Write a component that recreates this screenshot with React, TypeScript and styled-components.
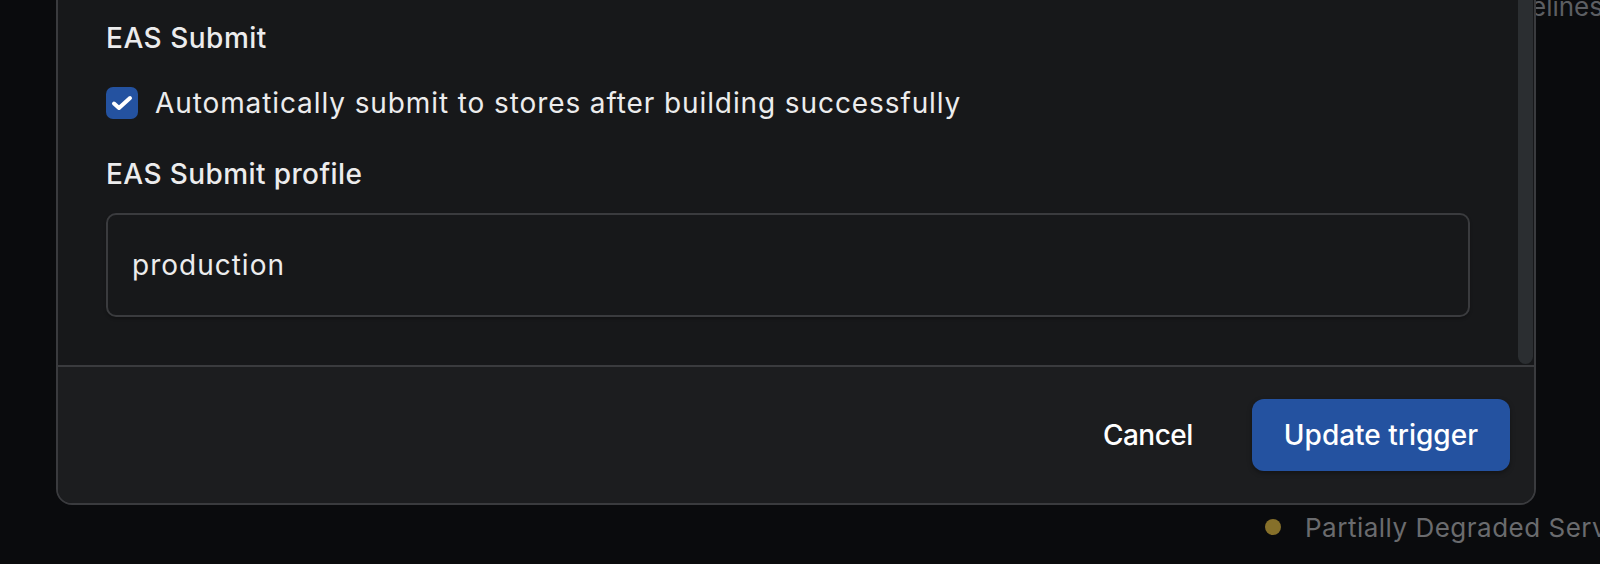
import React from "react";
import styled, { createGlobalStyle } from "styled-components";

const GlobalStyle = createGlobalStyle`
  html, body { margin: 0; padding: 0; background: #0a0b0d; }
  body { font-family: Inter, "Noto Sans", "Liberation Sans", sans-serif; -webkit-font-smoothing: antialiased; }
  * { box-sizing: border-box; }
`;

const Page = styled.div`
  position: relative;
  width: 1600px;
  height: 564px;
  overflow: hidden;
  background: #0a0b0d;
  display: flex;
  flex-direction: column;
`;

const TopLinks = styled.nav`
  display: flex;
  padding-left: 1474px;
  white-space: nowrap;
  font-size: 26px;
  line-height: 14px;
  color: #5c5e62;
`;

const Spacer = styled.div`
  flex: 1;
`;

const StatusBar = styled.div`
  display: flex;
  align-items: center;
  gap: 24px;
  height: 40px;
  margin-bottom: 17px;
  padding-left: 1265px;
  white-space: nowrap;
  font-size: 26px;
  letter-spacing: 0.5px;
  color: #6a6b6e;
`;

const StatusDot = styled.span<{ $color: string }>`
  width: 16px;
  height: 16px;
  flex: none;
  border-radius: 50%;
  background: ${(p) => p.$color};
`;

const Overlay = styled.div`
  position: absolute;
  inset: 0;
  display: flex;
  flex-direction: column;
  justify-content: flex-end;
  padding: 0 0 59px 56px;
`;

const Modal = styled.div`
  flex: none;
  width: 1480px;
  display: flex;
  flex-direction: column;
  background: #17181a;
  border: 2px solid #3a3b3e;
  border-radius: 16px;
  overflow: hidden;
  color: #ececed;
`;

const ModalBody = styled.div`
  display: flex;
`;

const BodyContent = styled.div`
  flex: 1;
  display: flex;
  flex-direction: column;
  padding: 40px 48px 48px;
`;

const ScrollTrack = styled.div`
  width: 16px;
  display: flex;
  flex-direction: column;
  padding: 0 1px 1px 0;
`;

const ScrollThumb = styled.div`
  flex: 1;
  background: #2b2e31;
  border-radius: 0 0 8px 8px;
`;

const SectionTitle = styled.div`
  font-size: 28px;
  line-height: 40px;
  font-weight: 500;
  letter-spacing: 0.5px;
  margin-bottom: 25px;
`;

const CheckRow = styled.label`
  display: flex;
  align-items: center;
  gap: 17px;
  height: 40px;
  margin-bottom: 31px;
  font-size: 28px;
  line-height: 40px;
  letter-spacing: 0.9px;
`;

const CheckBox = styled.span<{ $checked: boolean }>`
  width: 32px;
  height: 32px;
  flex: none;
  display: flex;
  align-items: center;
  justify-content: center;
  border-radius: 7px;
  background: ${(p) => (p.$checked ? "#2452a0" : "transparent")};
`;

const FieldLabel = styled.div`
  font-size: 28px;
  line-height: 40px;
  font-weight: 500;
  letter-spacing: 0.4px;
  margin-bottom: 19px;
`;

const TextInput = styled.div`
  height: 104px;
  display: flex;
  align-items: center;
  padding: 0 24px;
  border: 2px solid #3a3b3e;
  border-radius: 10px;
  background: #17181a;
  box-shadow: 0 2px 3px rgba(0, 0, 0, 0.25);
  font-size: 28px;
  letter-spacing: 1px;
  color: #ececed;
`;

const Footer = styled.div`
  display: flex;
  justify-content: flex-end;
  align-items: center;
  gap: 31px;
  padding: 32px 24px;
  background: #1c1d1f;
  border-top: 2px solid #3a3b3e;
`;

const Button = styled.button<{ $primary?: boolean }>`
  height: 72px;
  padding: 0 ${(p) => (p.$primary ? "32px" : "28px")};
  border: none;
  border-radius: 12px;
  font-family: inherit;
  font-size: 28px;
  font-weight: 500;
  letter-spacing: ${(p) => (p.$primary ? "0" : "-0.5px")};
  color: #ffffff;
  background: ${(p) => (p.$primary ? "#2452a0" : "transparent")};
  box-shadow: ${(p) => (p.$primary ? "0 2px 5px rgba(0,0,0,0.35)" : "none")};
  cursor: pointer;
`;

const CheckIcon = () => (
  <svg width="32" height="32" viewBox="0 0 32 32">
    <polyline
      points="8 16.5 13 21 24 11"
      fill="none"
      stroke="#ffffff"
      strokeWidth="4"
      strokeLinecap="round"
      strokeLinejoin="round"
    />
  </svg>
);

export default function App() {
  return (
    <>
      <GlobalStyle />
      <Page>
        <TopLinks>Guidelines</TopLinks>
        <Spacer />
        <StatusBar>
          <StatusDot $color="#86702a" />
          Partially Degraded Service
        </StatusBar>
        <Overlay>
          <Modal>
            <ModalBody>
              <BodyContent>
                <SectionTitle>EAS Submit</SectionTitle>
                <CheckRow>
                  <CheckBox $checked>
                    <CheckIcon />
                  </CheckBox>
                  Automatically submit to stores after building successfully
                </CheckRow>
                <FieldLabel>EAS Submit profile</FieldLabel>
                <TextInput>production</TextInput>
              </BodyContent>
              <ScrollTrack>
                <ScrollThumb />
              </ScrollTrack>
            </ModalBody>
            <Footer>
              <Button>Cancel</Button>
              <Button $primary>Update trigger</Button>
            </Footer>
          </Modal>
        </Overlay>
      </Page>
    </>
  );
}
